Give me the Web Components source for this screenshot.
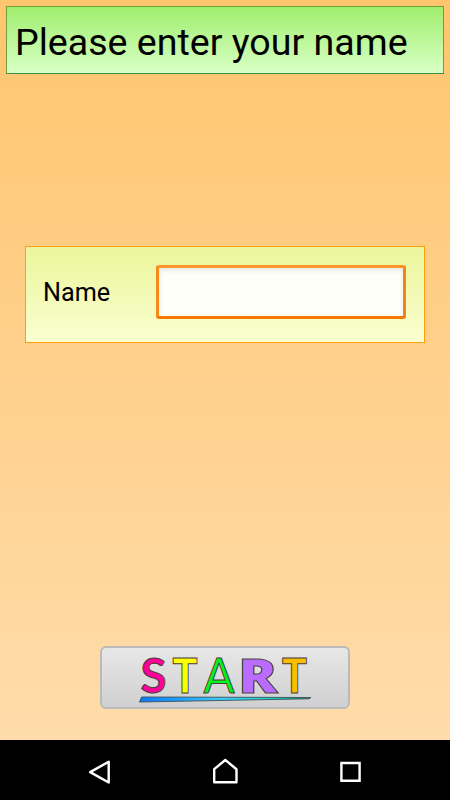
<!DOCTYPE html>
<html lang="en">
<head>
  <meta charset="UTF-8">
  <meta name="viewport" content="width=device-width, initial-scale=1.0">
  <title>Please enter your name</title>
  <style>
    body {
      margin: 0;
      font-family: Roboto, sans-serif;
      color: #000;
    }
  </style>
</head>
<body>

<!-- title-bar -->
<script>
  class TitleBar extends HTMLElement {
    constructor() {
      super();
      this.attachShadow({ mode: 'open' });
      this.shadowRoot.innerHTML = `
        <style>
          :host {
            display: flex;
            align-items: center;
            box-sizing: border-box;
            height: 68px;
            margin: 6px 6px 0;
            padding: 3px 0 0 8px;
            border: 1px solid #71a03a;
            border-bottom-color: #37913c;
            background: linear-gradient(#a0ee6e, #d8ffc4);
            font-size: 37.6px;
            white-space: nowrap;
          }
        </style>
        <slot></slot>
      `;
    }
  }

  customElements.define('title-bar', TitleBar);
</script>

<!-- name-form -->
<script>
  class NameForm extends HTMLElement {
    constructor() {
      super();
      this.attachShadow({ mode: 'open' });
      this.shadowRoot.innerHTML = `
        <style>
          :host {
            display: flex;
            align-items: flex-start;
            justify-content: space-between;
            box-sizing: border-box;
            height: 97px;
            margin: 172px 25px 0;
            padding: 18px 18px 0 17px;
            border: 1px solid #ff9f0c;
            background: linear-gradient(#ebf59b, #fbffd0);
          }
          label {
            font-size: 25.2px;
            line-height: 56px;
          }
          input {
            box-sizing: border-box;
            width: 250px;
            height: 54px;
            margin: 0;
            padding: 0 8px;
            border: 3px solid;
            border-color: #fb962b #f5831b #f57900 #f98a18;
            border-radius: 3px;
            outline: none;
            background: #fffffa;
            box-shadow: inset 0 2px 5px rgba(0, 0, 0, 0.1);
            font: 25px Roboto, sans-serif;
          }
        </style>
        <label for="name"><slot></slot></label>
        <input id="name" type="text">
      `;
    }
  }

  customElements.define('name-form', NameForm);
</script>

<!-- start-button -->
<script>
  class StartButton extends HTMLElement {
    constructor() {
      super();
      this.attachShadow({ mode: 'open' });
      this.shadowRoot.innerHTML = `
        <style>
          :host {
            display: block;
            width: 250px;
            height: 63px;
            margin: 303px auto 0;
          }
          button {
            display: block;
            box-sizing: border-box;
            width: 100%;
            height: 100%;
            padding: 0;
            border: 2px solid #bababa;
            border-radius: 6px;
            background: linear-gradient(#e7e7e7, #d0d0d0);
          }
          svg {
            display: block;
            overflow: visible;
          }
          text {
            stroke: #48403c;
            stroke-width: 1;
            font-family: Lato, sans-serif;
            font-size: 48px;
          }
          .wide {
            font-family: "Open Sans", sans-serif;
          }
        </style>
        <button aria-label="START">
          <svg width="246" height="59" viewBox="102 648 246 59">
            <defs>
              <linearGradient id="line">
                <stop offset="0" stop-color="#0878f8"/>
                <stop offset="0.5" stop-color="#3bcffa"/>
                <stop offset="0.8" stop-color="#16d6c6"/>
                <stop offset="1" stop-color="#07915e"/>
              </linearGradient>
            </defs>
            <text x="140.5" y="692.5" font-weight="700" fill="#ff0098" textLength="26" lengthAdjust="spacingAndGlyphs">S</text>
            <text x="172.5" y="692.5" font-weight="900" fill="#ffff00" textLength="25" lengthAdjust="spacingAndGlyphs">T</text>
            <text x="203.5" y="692.5" font-weight="400" fill="#00f51a" textLength="31" lengthAdjust="spacingAndGlyphs">A</text>
            <text class="wide" x="238" y="692.5" font-weight="800" fill="#b96cff" textLength="39.5" lengthAdjust="spacingAndGlyphs">R</text>
            <text x="282" y="692.5" font-weight="900" fill="#fabd00" textLength="25" lengthAdjust="spacingAndGlyphs">T</text>
            <path d="M141.5 697 L311 697.5 L309 698.8 L139.5 702 Z" fill="url(#line)" stroke="#3c5058" stroke-width="0.9"/>
          </svg>
        </button>
      `;
    }
  }

  customElements.define('start-button', StartButton);
</script>

<!-- nav-bar -->
<script>
  class NavBar extends HTMLElement {
    constructor() {
      super();
      this.attachShadow({ mode: 'open' });
      this.shadowRoot.innerHTML = `
        <style>
          :host {
            display: flex;
            align-items: center;
            justify-content: space-between;
            box-sizing: border-box;
            height: 60px;
            margin-top: auto;
            padding: 4px 85px 0;
            background: #000;
          }
          svg {
            display: block;
            fill: none;
            stroke: #fff;
            stroke-width: 2.4;
            stroke-linejoin: round;
          }
        </style>
        <svg width="30" height="30"><path d="M5.2 15.1 L23.7 4.7 V25.5 Z"/></svg>
        <svg width="30" height="30"><path d="M4.2 25.3 V12.2 L15.3 3 L26.5 12.2 V25.3 Z"/></svg>
        <svg width="30" height="30"><path stroke-linejoin="miter" d="M6.4 6 H24.6 V23.8 H6.4 Z"/></svg>
      `;
    }
  }

  customElements.define('nav-bar', NavBar);
</script>

<!-- app-screen -->
<script>
  class AppScreen extends HTMLElement {
    constructor() {
      super();
      this.attachShadow({ mode: 'open' });
      this.shadowRoot.innerHTML = `
        <style>
          :host {
            display: flex;
            flex-direction: column;
            height: 800px;
            overflow: hidden;
            background: linear-gradient(#ffc56e, #ffdcab 740px);
          }
        </style>
        <slot></slot>
      `;
    }
  }

  customElements.define('app-screen', AppScreen);
</script>

<app-screen>
  <title-bar>Please enter your name</title-bar>
  <name-form>Name</name-form>
  <start-button></start-button>
  <nav-bar></nav-bar>
</app-screen>

</body>
</html>
